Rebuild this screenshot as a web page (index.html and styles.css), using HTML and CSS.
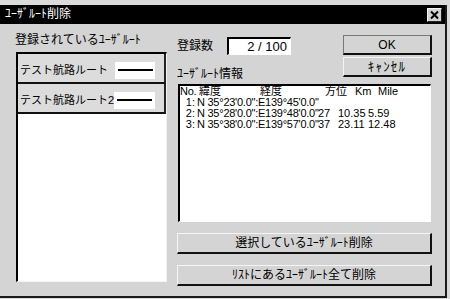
FILE: index.html
```html
<!DOCTYPE html>
<html lang="ja">
<head>
<meta charset="utf-8">
<title>ﾕｰｻﾞﾙｰﾄ削除</title>
<link rel="stylesheet" href="styles.css">
</head>
<body>
<div class="dialog">
  <div class="titlebar">
    <span class="title">ﾕｰｻﾞﾙｰﾄ削除</span>
    <span class="close"><svg width="13" height="12" viewBox="0 0 13 12"><path d="M3 2.5 L10 9.5 M10 2.5 L3 9.5" stroke="#000" stroke-width="2" fill="none"/></svg></span>
  </div>
  <div class="content">
    <div class="left">
      <div class="caption">登録されているﾕｰｻﾞﾙｰﾄ</div>
      <div class="routes">
        <div class="route"><span>テスト航路ルート</span><span class="swatch"><i></i></span></div>
        <div class="route"><span>テスト航路ルート2</span><span class="swatch wide-sw"><i></i></span></div>
      </div>
    </div>
    <div class="right">
      <div class="top">
        <div class="fields">
          <div class="count-row"><span class="lbl count-lbl">登録数</span><span class="count">2 / 100</span></div>
          <div class="lbl info-lbl">ﾕｰｻﾞﾙｰﾄ情報</div>
        </div>
        <div class="btns">
          <button class="btn small default">OK</button>
          <button class="btn small cancel">ｷｬﾝｾﾙ</button>
        </div>
      </div>
      <div class="info">
        <div class="hdr"><span class="no">No.</span><span>緯度</span><span>経度</span><span>方位</span><span>Km</span><span>Mile</span></div>
        <div class="row"><span class="idx">1:</span><span class="coord">N 35°23'0.0":E139°45'0.0"</span><span></span><span></span><span></span></div>
        <div class="row"><span class="idx">2:</span><span class="coord">N 35°28'0.0":E139°48'0.0"</span><span>27</span><span>10.35</span><span>5.59</span></div>
        <div class="row"><span class="idx">3:</span><span class="coord">N 35°38'0.0":E139°57'0.0"</span><span>37</span><span>23.11</span><span>12.48</span></div>
      </div>
      <button class="btn wide">選択しているﾕｰｻﾞﾙｰﾄ削除</button>
      <button class="btn wide">ﾘｽﾄにあるﾕｰｻﾞﾙｰﾄ全て削除</button>
    </div>
  </div>
</div>
</body>
</html>
```

FILE: styles.css
```css
html, body {
  margin: 0;
  padding: 0;
}
body {
  width: 450px;
  height: 299px;
  overflow: hidden;
  background: #dadada;
  font-family: "Liberation Sans", "Noto Sans CJK JP", sans-serif;
  color: #000;
}
.dialog {
  margin-top: 5px;
  width: 445px;
  height: 291px;
  border-right: 2px solid #1a1a1a;
  border-bottom: 2px solid #1a1a1a;
  background: #d4d4d4;
}
.titlebar {
  height: 19px;
  background: #000;
  color: #fff;
  display: flex;
  align-items: center;
  justify-content: space-between;
  padding: 0 3px 0 5px;
}
.title {
  font-size: 12px;
  line-height: 19px;
}
.close {
  width: 15px;
  height: 14px;
  box-sizing: border-box;
  background: #d4d4d4;
  border-top: 1px solid #f4f4f4;
  border-left: 1px solid #f4f4f4;
  border-right: 1px solid #222;
  border-bottom: 1px solid #222;
  display: flex;
  align-items: center;
  justify-content: center;
}
.content {
  display: flex;
  gap: 10px;
  padding: 9px 0 0 15px;
}
.left {
  width: 152px;
}
.caption {
  font-size: 12px;
  line-height: 14px;
  height: 14px;
  margin-bottom: 5px;
  white-space: nowrap;
}
.routes {
  margin-left: 1px;
  width: 151px;
  height: 230px;
  box-sizing: border-box;
  border-top: 2px solid #000;
  border-left: 2px solid #000;
  border-right: 1px solid #f4f4f4;
  border-bottom: 1px solid #f4f4f4;
  background: #fff;
}
.route {
  height: 30px;
  box-sizing: border-box;
  border-bottom: 2px solid #111;
  border-right: 2px solid #222;
  background: #dcdcdc;
  display: flex;
  align-items: center;
  justify-content: space-between;
  padding: 4px 9px 0 2px;
  font-size: 11px;
  line-height: 14px;
  white-space: nowrap;
}
.swatch {
  width: 40px;
  height: 17px;
  background: #fff;
  display: flex;
  align-items: center;
  justify-content: center;
}
.swatch.wide-sw {
  width: 42px;
}
.swatch i {
  display: block;
  width: 35px;
  height: 2px;
  background: #000;
}
.right {
  width: 255px;
  margin-top: 2px;
  display: flex;
  flex-direction: column;
}
.top {
  display: flex;
  justify-content: space-between;
}
.fields {
  padding-top: 2px;
}
.count-row {
  display: flex;
  align-items: center;
  height: 18px;
}
.lbl {
  font-size: 12px;
  line-height: 14px;
  white-space: nowrap;
}
.count-lbl {
  width: 50px;
}
.count {
  width: 64px;
  height: 18px;
  box-sizing: border-box;
  border-top: 2px solid #000;
  border-left: 2px solid #000;
  border-right: 1px solid #fff;
  border-bottom: 1px solid #fff;
  background: #fff;
  font-size: 13px;
  line-height: 15px;
  text-align: right;
  padding-right: 3px;
}
.info-lbl {
  margin-top: 12px;
}
.btns {
  width: 89px;
  display: flex;
  flex-direction: column;
  gap: 2px;
}
.btn {
  font: inherit;
  color: #000;
  margin: 0;
  padding: 0;
  background: #d4d4d4;
  box-sizing: border-box;
  border-top: 1px solid #f4f4f4;
  border-left: 1px solid #f4f4f4;
  border-right: 2px solid #111;
  border-bottom: 2px solid #111;
  font-size: 12px;
  line-height: 14px;
  white-space: nowrap;
}
.btn.small {
  height: 20px;
}
.btn.default {
  border-top-color: #777;
  border-left-color: #777;
}
.btn.cancel {
  font-size: 13px;
  letter-spacing: 1.2px;
}
.info {
  margin: 3px 0 0 1px;
  width: 253px;
  height: 138px;
  box-sizing: border-box;
  border-top: 2px solid #000;
  border-left: 2px solid #000;
  border-right: 1px solid #fff;
  border-bottom: 1px solid #fff;
  background: #fff;
  font-size: 11px;
  line-height: 11px;
  white-space: nowrap;
}
.hdr {
  display: grid;
  grid-template-columns: 19px 61px 65px 30px 23px auto;
}
.no {
  letter-spacing: -0.3px;
}
.row {
  display: grid;
  grid-template-columns: 17px 121px 20px 30px auto;
}
.idx {
  text-align: right;
  padding-right: 2px;
}
.coord {
  letter-spacing: -0.25px;
}
.btn.wide {
  width: 255px;
  height: 21px;
  margin-top: 11px;
}
```
